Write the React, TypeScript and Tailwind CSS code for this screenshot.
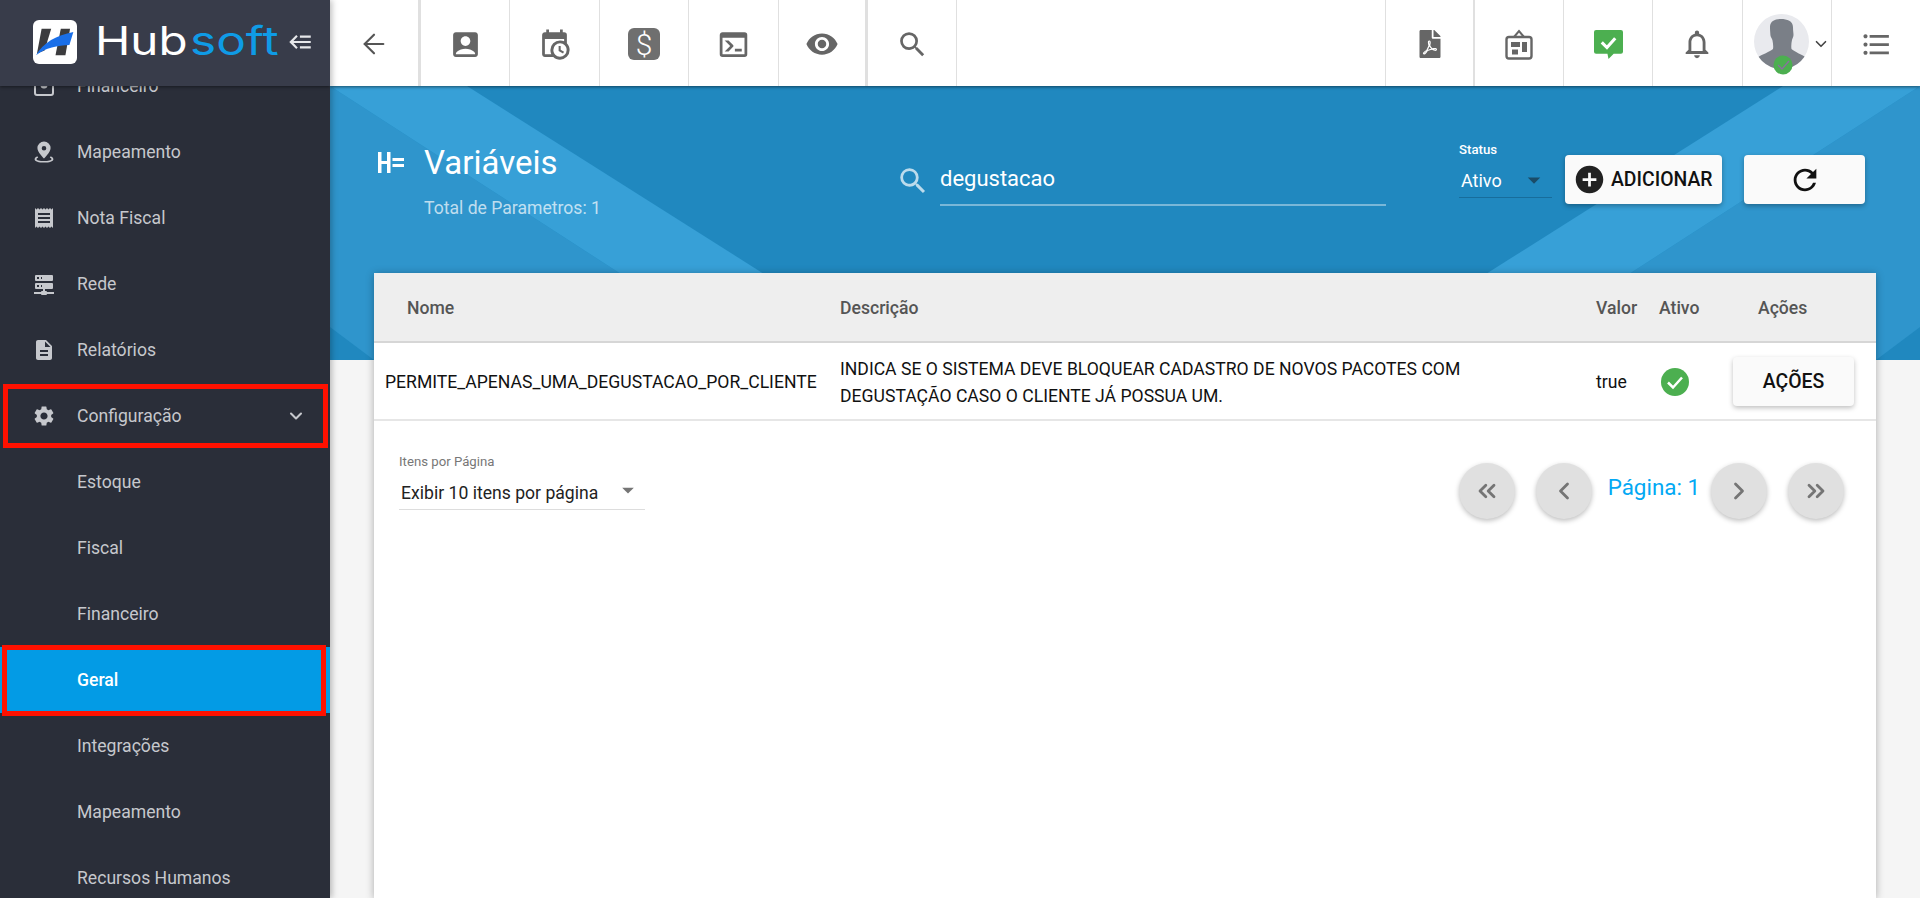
import type { ReactNode } from "react";
import { ArrowLeft, ChevronDown, ChevronLeft, ChevronRight, ChevronsLeft, ChevronsRight } from "lucide-react";
import { FaFilePdf } from "react-icons/fa";
import {
  MdAccountBox,
  MdAddCircle,
  MdArrowDropDown,
  MdDescription,
  MdFormatListBulleted,
  MdNotificationsNone,
  MdReceipt,
  MdRefresh,
  MdSearch,
  MdSettings,
  MdVisibility,
} from "react-icons/md";

const Mdi = ({ d, size, className }: { d: string; size: number; className?: string }) => (
  <svg width={size} height={size} viewBox="0 0 24 24" fill="currentColor" className={className}>
    <path d={d} />
  </svg>
);

const SERVER =
  "M13,19H14A1,1 0 0,1 15,20H22V22H15A1,1 0 0,1 14,23H10A1,1 0 0,1 9,22H2V20H9A1,1 0 0,1 10,19H11V17H4A1,1 0 0,1 3,16V12A1,1 0 0,1 4,11H20A1,1 0 0,1 21,12V16A1,1 0 0,1 20,17H13V19M4,3H20A1,1 0 0,1 21,4V8A1,1 0 0,1 20,9H4A1,1 0 0,1 3,8V4A1,1 0 0,1 4,3M9,7H10V5H9V7M9,15H10V13H9V15M5,5V7H7V5H5M5,13V15H7V13H5Z";
const CALENDAR =
  "M15,13H16.5V15.82L18.94,17.23L18.19,18.53L15,16.69V13M19,8H5V19H9.67C9.24,18.09 9,17.07 9,16A7,7 0 0,1 16,9C17.07,9 18.09,9.24 19,9.67V8M5,21C3.89,21 3,20.1 3,19V5C3,3.89 3.89,3 5,3H6V1H8V3H16V1H18V3H19A2,2 0 0,1 21,5V11.1C22.24,12.36 23,14.09 23,16A7,7 0 0,1 16,23C14.09,23 12.36,22.24 11.1,21H5M16,11.15A4.85,4.85 0 0,0 11.15,16C11.15,18.68 13.32,20.85 16,20.85A4.85,4.85 0 0,0 20.85,16C20.85,13.32 18.68,11.15 16,11.15Z";
const CONSOLE =
  "M20,19V7H4V19H20M20,3A2,2 0 0,1 22,5V19A2,2 0 0,1 20,21H4A2,2 0 0,1 2,19V5C2,3.89 2.9,3 4,3H20M13,17V15H18V17H13M9.58,13L5.57,9H8.4L11.7,12.3C12.09,12.69 12.09,13.33 11.7,13.72L8.42,17H5.59L9.58,13Z";
const BACKBURGER = "M5,13L9,17L7.6,18.42L1.18,12L7.6,5.58L9,7L5,11H21V13H5M21,6V8H11V6H21M21,16V18H11V16H21Z";

const PinIcon = () => (
  <svg width={24} height={24} viewBox="0 0 24 24" fill="currentColor">
    <path fillRule="evenodd" d="M12 1.5a6.6 6.6 0 0 0-6.6 6.6c0 4.4 6.6 10.4 6.6 10.4s6.6-6 6.6-10.4A6.6 6.6 0 0 0 12 1.5Zm0 4.4a2.3 2.3 0 1 1 0 4.6 2.3 2.3 0 0 1 0-4.6Z" />
    <path d="M5.2 16.2C3.6 17 2.6 18 2.6 19.2c0 2.1 4.2 3.4 9.4 3.4s9.4-1.3 9.4-3.4c0-1.2-1-2.2-2.6-3l-1 1.3c1 .5 1.700 1.100 1.700 1.700 0 1-3.300 1.900-7.500 1.900s-7.500-.9-7.500-1.900c0-.6.7-1.200 1.700-1.700l-1-1.300Z" />
  </svg>
);

const WalletIcon = () => (
  <svg width={24} height={24} viewBox="0 0 24 24" fill="none" stroke="currentColor" strokeWidth={2}>
    <rect x="3" y="3" width="18" height="18" rx="2" />
    <circle cx="12" cy="11" r="2.5" fill="currentColor" />
  </svg>
);

const BoardIcon = () => (
  <svg width={28} height={31} viewBox="0 0 28 31" fill="none" stroke="#666" strokeWidth={2.4}>
    <path d="M9 8 14 2l5 6" strokeWidth={2} />
    <rect x="1.5" y="8" width="25" height="21.5" rx="2.5" />
    <rect x="6" y="13" width="9" height="5" fill="#666" stroke="none" />
    <rect x="7" y="20.5" width="6" height="5" fill="#666" stroke="none" />
    <rect x="17" y="13" width="5" height="10" fill="#666" stroke="none" />
  </svg>
);

const ChatIcon = () => (
  <svg width={29} height={29} viewBox="0 0 28 28">
    <path d="M2 0h24a2 2 0 0 1 2 2v19a2 2 0 0 1-2 2h-7l-5 5-1-5H2a2 2 0 0 1-2-2V2a2 2 0 0 1 2-2Z" fill="#4caf50" />
    <path d="m7.5 12 5 5 8-9" fill="none" stroke="#fff" strokeWidth={3} />
  </svg>
);

const Avatar = () => (
  <svg width={55} height={62} viewBox="0 0 55 62" className="shrink-0">
    <defs>
      <clipPath id="avatar-circle">
        <circle cx="27.5" cy="28.5" r="27.5" />
      </clipPath>
    </defs>
    <circle cx="27.5" cy="28.5" r="27.5" fill="#e9eaee" />
    <g clipPath="url(#avatar-circle)">
      <path
        d="M16 14c0-6 5-8 11-8s12 2 12 8c0 4 .5 6 .5 8s-1 3-1.500 5c-.6 3-1 6-.5 9 3 3 10 5 15 9l-2 12H5L3 45c5-4 13-6 16-9 .5-3 0-6-.6-9-.5-2-2-3-2-5s-.4-4-.4-8Z"
        fill="#7a7f87"
      />
    </g>
    <circle cx="29" cy="52" r="9.500" fill="#4caf50" />
    <path d="m24 52 4 4 7-8" fill="none" stroke="#8b6fa0" strokeWidth={1.300} />
  </svg>
);

const Logo = () => (
  <svg width={280} height={86} viewBox="0 0 280 86" className="shrink-0">
    <rect x="33" y="20" width="44" height="44" rx="6" fill="#fff" />
    <svg x="33" y="20" width="44" height="44" viewBox="24 24 133 132">
      <path d="M50 50h29l-20 66-23 9Z" fill="#3c3c3e" />
      <path d="M108 50h28l-14 80H92Z" fill="#3c3c3e" />
      <path d="M33 130c22-38 62-60 113-70l-12 39c-36 1-72 8-101 31Z" fill="#1a6fe8" />
    </svg>
    <text transform="translate(95 55) scale(1.22 1)" fontFamily="Inter, sans-serif" fontSize="39" fill="#fff">
      Hub
    </text>
    <text transform="translate(190 55) scale(1.27 1)" fontFamily="Inter, sans-serif" fontSize="39" fill="#0f9be6">
      soft
    </text>
  </svg>
);

const VarIcon = () => (
  <svg width={26} height={21} viewBox="0 0 26 21" fill="#fff" className="shrink-0">
    <rect x="0" y="0" width="3.500" height="21" />
    <rect x="9" y="0" width="3.500" height="21" />
    <rect x="3" y="9" width="6" height="3" />
    <rect x="14.500" y="6" width="11.500" height="3" />
    <rect x="14.500" y="12" width="11.500" height="3" />
  </svg>
);

type MenuItem = {
  label: string;
  icon?: ReactNode;
  active?: boolean;
  open?: boolean;
};

const menu: MenuItem[] = [
  { label: "Financeiro", icon: <WalletIcon /> },
  { label: "Mapeamento", icon: <PinIcon /> },
  { label: "Nota Fiscal", icon: <MdReceipt size={24} /> },
  { label: "Rede", icon: <Mdi d={SERVER} size={24} /> },
  { label: "Relatórios", icon: <MdDescription size={24} /> },
  { label: "Configuração", icon: <MdSettings size={24} />, open: true },
  { label: "Estoque" },
  { label: "Fiscal" },
  { label: "Financeiro" },
  { label: "Geral", active: true },
  { label: "Integrações" },
  { label: "Mapeamento" },
  { label: "Recursos Humanos" },
];

const Sidebar = () => (
  <aside className="relative z-20 flex h-full w-[330px] shrink-0 flex-col overflow-hidden bg-[#2a2e39] shadow-[2px_0_6px_rgba(0,0,0,0.25)]">
    <div className="relative z-10 flex h-[86px] shrink-0 items-center bg-[#383c4a] shadow-[0_1px_3px_rgba(0,0,0,0.45)]">
      <Logo />
      <Mdi d={BACKBURGER} size={26} className="absolute left-[288px] top-[29px] text-[#e6e7ea]" />
    </div>
    <nav className="-mt-[33px] flex flex-col">
      {menu.map((item, i) => (
        <div
          key={i}
          className={`relative flex h-[66px] shrink-0 items-center text-[17.6px] ${
            item.active ? "bg-[#039be5] font-medium text-white" : "text-[#c6c8cd]"
          }`}
        >
          <span className="flex w-[77px] shrink-0 justify-center pl-[11px]">{item.icon}</span>
          <span>{item.label}</span>
          {item.open && <ChevronDown size={20} strokeWidth={2.5} className="absolute left-[286px] top-[23px]" />}
          {item.open && (
            <span className="absolute bottom-[1px] left-[3px] right-[2px] top-[1px] border-[5px] border-[#ff1100]" />
          )}
          {item.active && (
            <span className="absolute -bottom-[3px] -top-[2px] left-[2px] right-[4px] border-[5px] border-[#ff1100]" />
          )}
        </div>
      ))}
    </nav>
  </aside>
);

const cellBase = "flex h-full w-[89.4px] shrink-0 items-center justify-center pt-[2px] text-[#666]";

const TopBar = () => (
  <header className="relative z-10 flex h-[86px] shrink-0 items-center justify-between bg-white shadow-[0_1px_3px_rgba(0,0,0,0.5)]">
    <div className="flex h-full">
      <div className={`${cellBase} !w-[91px] border-r-[3px] border-[#e0e0e0]`}>
        <ArrowLeft size={32} strokeWidth={1.6} className="text-[#555]" />
      </div>
      <div className={`${cellBase} border-r border-[#e0e0e0]`}>
        <MdAccountBox size={33} />
      </div>
      <div className={`${cellBase} border-r border-[#e0e0e0]`}>
        <Mdi d={CALENDAR} size={33} />
      </div>
      <div className={`${cellBase} border-r border-[#e0e0e0]`}>
        <span className="flex h-[32px] w-[32px] items-center justify-center rounded-[6px] bg-[#6f6f6f] text-[30px] font-light text-white">
          $
        </span>
      </div>
      <div className={`${cellBase} border-r border-[#e0e0e0]`}>
        <Mdi d={CONSOLE} size={33} />
      </div>
      <div className={`${cellBase} border-r-[3px] border-[#e0e0e0]`}>
        <MdVisibility size={34} />
      </div>
      <div className={`${cellBase} border-r border-[#e0e0e0]`}>
        <MdSearch size={33} />
      </div>
    </div>
    <div className="flex h-full">
      <div className={`${cellBase} border-x border-[#e0e0e0]`}>
        <FaFilePdf size={28} />
      </div>
      <div className={`${cellBase} border-x border-[#e0e0e0]`}>
        <BoardIcon />
      </div>
      <div className={`${cellBase} border-r border-[#e0e0e0]`}>
        <ChatIcon />
      </div>
      <div className={`${cellBase} border-r border-[#e0e0e0]`}>
        <MdNotificationsNone size={34} />
      </div>
      <div className={`${cellBase} !justify-start border-r border-[#e0e0e0] pl-[11px]`}>
        <Avatar />
        <ChevronDown size={18} strokeWidth={2.2} className="ml-[3px] text-[#444]" />
      </div>
      <div className={`${cellBase} !w-[88px]`}>
        <MdFormatListBulleted size={33} />
      </div>
    </div>
  </header>
);

const Banner = () => (
  <svg className="absolute left-0 top-0 h-[274px] w-full" viewBox="0 0 1590 274" preserveAspectRatio="none">
    <rect width="1590" height="274" fill="#2088bf" />
    <polygon points="0,0 424,274 44,274 0,241" fill="#2f95cc" />
    <polygon points="0,0 137,0 570,274 424,274" fill="#37a0d7" />
    <polygon points="1590,0 1166,274 1546,274 1590,241" fill="#2f95cc" />
    <polygon points="1590,0 1453,0 1020,274 1166,274" fill="#37a0d7" />
  </svg>
);

const PageHeader = () => (
  <div className="relative flex h-[187px] shrink-0 text-white">
    <div className="flex w-[566px] shrink-0 pl-[48px] pt-[66px]">
      <VarIcon />
      <div className="ml-[20px] -mt-[7px]">
        <h1 className="text-[33px] leading-[36px]">Variáveis</h1>
        <p className="mt-[17px] text-[17.6px] leading-[20px] text-white/70">Total de Parametros: 1</p>
      </div>
    </div>
    <div className="flex w-[490px] shrink-0 items-start pt-[77px]">
      <MdSearch size={34} className="mt-[1px] shrink-0 text-white/70" />
      <div className="ml-[10px] h-[43px] w-[446px] border-b-[2px] border-white/40 text-[22px] leading-[32px]">
        degustacao
      </div>
    </div>
    <div className="ml-[73px] w-[93px] shrink-0 pt-[57px]">
      <div className="text-[13.2px] font-medium leading-[14px]">Status</div>
      <div className="mt-[6px] flex h-[35px] items-center justify-between border-b border-[#176d9c] pl-[2px]">
        <span className="text-[18px]">Ativo</span>
        <MdArrowDropDown size={30} className="mr-[3px] text-[#1a4c68]" />
      </div>
    </div>
    <div className="ml-[13px] flex gap-[22px] pt-[69px]">
      <button className="flex h-[49px] w-[157px] items-center rounded-[4px] bg-[#fafafa] pl-[8px] text-[19.4px] font-medium text-[#111] shadow-[0_2px_5px_rgba(0,0,0,0.3)]">
        <MdAddCircle size={33} className="text-[#212121]" />
        <span className="ml-[5px]">ADICIONAR</span>
      </button>
      <button className="flex h-[49px] w-[121px] items-center justify-center rounded-[4px] bg-[#fafafa] text-[#111] shadow-[0_2px_5px_rgba(0,0,0,0.3)]">
        <MdRefresh size={34} />
      </button>
    </div>
  </div>
);

const TABLE_COLS = "grid grid-cols-[466px_756px_63px_74px_1fr]";

const PagerButton = ({ children }: { children: ReactNode }) => (
  <button className="flex h-[56px] w-[56px] items-center justify-center rounded-full bg-[#e0e0e0] text-[#757575] shadow-[0_2px_5px_rgba(0,0,0,0.25)]">
    {children}
  </button>
);

const Card = () => (
  <section className="relative mx-[44px] flex-1 bg-white shadow-[0_1px_8px_rgba(0,0,0,0.3)]">
    <div className={`${TABLE_COLS} h-[70px] items-center border-b-2 border-[#d6d6d6] bg-[#eeeeee] pt-[3px] text-[17.6px] font-medium text-[#555]`}>
      <div className="pl-[33px]">Nome</div>
      <div>Descrição</div>
      <div>Valor</div>
      <div>Ativo</div>
      <div className="pl-[25px]">Ações</div>
    </div>
    <div className={`${TABLE_COLS} h-[78px] items-center border-b-2 border-[#e6e6e6] pt-[2px] text-[17.6px] text-[#111]`}>
      <div className="pl-[11px]">PERMITE_APENAS_UMA_DEGUSTACAO_POR_CLIENTE</div>
      <div className="pt-[2px] leading-[27px]">
        INDICA SE O SISTEMA DEVE BLOQUEAR CADASTRO DE NOVOS PACOTES COM
        <br />
        DEGUSTAÇÃO CASO O CLIENTE JÁ POSSUA UM.
      </div>
      <div>true</div>
      <div className="pl-[2px]">
        <svg width={28} height={28} viewBox="0 0 28 28">
          <circle cx="14" cy="14" r="14" fill="#4caf50" />
          <path d="m7 14.500 5 5 9-10" fill="none" stroke="#fff" strokeWidth={2.500} />
        </svg>
      </div>
      <div className="-mt-[2px]">
        <button className="h-[49px] w-[121px] rounded-[4px] bg-[#fafafa] pt-[2px] text-[19.4px] font-medium text-[#111] shadow-[0_2px_5px_rgba(0,0,0,0.25)]">
          AÇÕES
        </button>
      </div>
    </div>
    <div className="flex items-start justify-between pl-[25px] pr-[32px] pt-[34px]">
      <div className="w-[246px]">
        <div className="text-[13.2px] leading-[14px] text-[#777]">Itens por Página</div>
        <div className="mt-[5px] flex h-[36px] items-center justify-between border-b border-[#ddd] pl-[2px] pt-[3px] text-[17.6px] text-[#222]">
          <span>Exibir 10 itens por página</span>
          <MdArrowDropDown size={28} className="mb-[6px] mr-[3px] text-[#757575]" />
        </div>
      </div>
      <div className="flex items-start pt-[8px]">
        <PagerButton>
          <ChevronsLeft size={28} strokeWidth={2.4} />
        </PagerButton>
        <div className="ml-[21px]">
          <PagerButton>
            <ChevronLeft size={28} strokeWidth={2.4} />
          </PagerButton>
        </div>
        <span className="ml-[16px] mr-[11px] pt-[10px] text-[22.4px] leading-[28px] text-[#03a9f4]">Página: 1</span>
        <PagerButton>
          <ChevronRight size={28} strokeWidth={2.4} />
        </PagerButton>
        <div className="ml-[21px]">
          <PagerButton>
            <ChevronsRight size={28} strokeWidth={2.4} />
          </PagerButton>
        </div>
      </div>
    </div>
  </section>
);

export default function App() {
  return (
    <div className="flex h-screen w-full overflow-hidden bg-[#f5f5f5] font-[Roboto,sans-serif]">
      <Sidebar />
      <main className="flex min-w-0 flex-1 flex-col">
        <TopBar />
        <div className="relative flex flex-1 flex-col">
          <Banner />
          <PageHeader />
          <Card />
        </div>
      </main>
    </div>
  );
}
